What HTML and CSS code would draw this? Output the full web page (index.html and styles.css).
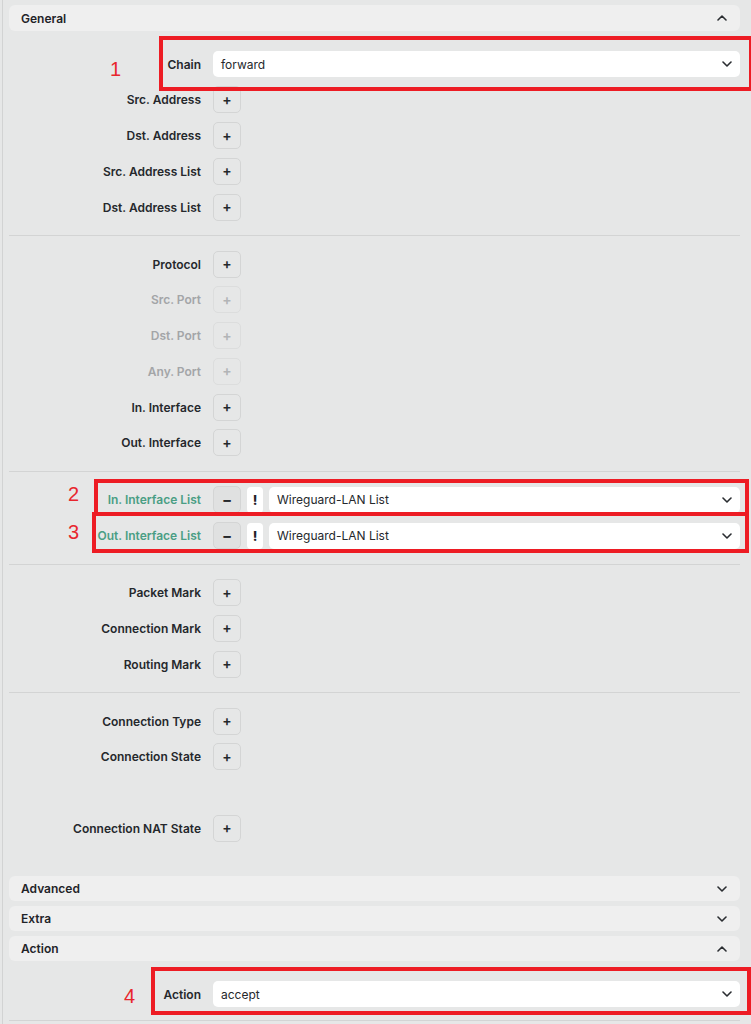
FILE: index.html
```html
<!DOCTYPE html>
<html lang="en">
<head>
<meta charset="UTF-8">
<meta name="viewport" content="width=device-width, initial-scale=1.0">
<title>Firewall Rule</title>
<link rel="stylesheet" href="styles.css">
</head>
<body>
<div class="page">

  <div class="section-head">
    <span>General</span>
    <svg class="chev" width="10" height="6" viewBox="0 0 10 6"><path d="M1 5 L5 1 L9 5" /></svg>
  </div>

  <div class="section-body">
    <div class="group">
      <div class="row">
        <label>Chain</label>
        <div class="select"><span>forward</span><svg class="chev" width="10" height="6" viewBox="0 0 10 6"><path d="M1 1 L5 5 L9 1" /></svg></div>
      </div>
      <div class="row"><label>Src. Address</label><button class="add">+</button></div>
      <div class="row"><label>Dst. Address</label><button class="add">+</button></div>
      <div class="row"><label>Src. Address List</label><button class="add">+</button></div>
      <div class="row"><label>Dst. Address List</label><button class="add">+</button></div>
    </div>

    <div class="group">
      <div class="row"><label>Protocol</label><button class="add">+</button></div>
      <div class="row off"><label>Src. Port</label><button class="add">+</button></div>
      <div class="row off"><label>Dst. Port</label><button class="add">+</button></div>
      <div class="row off"><label>Any. Port</label><button class="add">+</button></div>
      <div class="row"><label>In. Interface</label><button class="add">+</button></div>
      <div class="row"><label>Out. Interface</label><button class="add">+</button></div>
    </div>

    <div class="group">
      <div class="row set">
        <label>In. Interface List</label>
        <button class="remove">&minus;</button>
        <span class="negate">!</span>
        <div class="select"><span>Wireguard-LAN List</span><svg class="chev" width="10" height="6" viewBox="0 0 10 6"><path d="M1 1 L5 5 L9 1" /></svg></div>
      </div>
      <div class="row set">
        <label>Out. Interface List</label>
        <button class="remove">&minus;</button>
        <span class="negate">!</span>
        <div class="select"><span>Wireguard-LAN List</span><svg class="chev" width="10" height="6" viewBox="0 0 10 6"><path d="M1 1 L5 5 L9 1" /></svg></div>
      </div>
    </div>

    <div class="group">
      <div class="row"><label>Packet Mark</label><button class="add">+</button></div>
      <div class="row"><label>Connection Mark</label><button class="add">+</button></div>
      <div class="row"><label>Routing Mark</label><button class="add">+</button></div>
    </div>

    <div class="group last">
      <div class="row"><label>Connection Type</label><button class="add">+</button></div>
      <div class="row"><label>Connection State</label><button class="add">+</button></div>
      <div class="row"></div>
      <div class="row"><label>Connection NAT State</label><button class="add">+</button></div>
    </div>
  </div>

  <div class="section-head closed">
    <span>Advanced</span>
    <svg class="chev" width="10" height="6" viewBox="0 0 10 6"><path d="M1 1 L5 5 L9 1" /></svg>
  </div>
  <div class="section-head closed">
    <span>Extra</span>
    <svg class="chev" width="10" height="6" viewBox="0 0 10 6"><path d="M1 1 L5 5 L9 1" /></svg>
  </div>
  <div class="section-head closed">
    <span>Action</span>
    <svg class="chev" width="10" height="6" viewBox="0 0 10 6"><path d="M1 5 L5 1 L9 5" /></svg>
  </div>

  <div class="section-body action-body">
    <div class="group">
      <div class="row">
        <label>Action</label>
        <div class="select"><span>accept</span><svg class="chev" width="10" height="6" viewBox="0 0 10 6"><path d="M1 1 L5 5 L9 1" /></svg></div>
      </div>
    </div>
  </div>

  <!-- red annotation marks drawn over the form -->
  <div class="mark box1"></div>
  <div class="mark box2"></div>
  <div class="mark box3"></div>
  <div class="mark box4"></div>
  <span class="num n1">1</span>
  <span class="num n2">2</span>
  <span class="num n3">3</span>
  <span class="num n4">4</span>
</div>
</body>
</html>
```

FILE: styles.css
```css
body {
  margin: 0;
  padding: 0;
  background-color: #e6e7e7;
  font-family: 'Inter', 'Noto Sans', sans-serif;
  font-size: 12px;
  color: #1f2328;
}
.page {
  position: relative;
  margin-left: 2px;
  border-left: 1px solid #d2d3d3;
  padding: 5px 11px 0 6px;
  min-height: 1024px;
  box-sizing: border-box;
}
.section-head {
  display: flex;
  align-items: center;
  justify-content: space-between;
  height: 26px;
  padding: 0 13px 0 12px;
  background-color: #efefef;
  border-radius: 6px;
  font-weight: 600;
}
.section-head.closed {
  height: 25px;
  margin-top: 5px;
}
.chev {
  fill: none;
  stroke: #2a2d31;
  stroke-width: 1.6;
  stroke-linecap: round;
  stroke-linejoin: round;
}
.section-body {
  padding-top: 5px;
}
.group {
  display: flex;
  flex-direction: column;
  gap: 9.75px;
  padding: 15px 0 15px;
  border-bottom: 1px solid #d3d4d4;
}
.group.last {
  border-bottom: none;
  padding-bottom: 30px;
}
.row {
  display: flex;
  align-items: center;
  height: 26px;
}
.row label {
  width: 192px;
  flex: none;
  margin-right: 12px;
  text-align: right;
  font-weight: 600;
  color: #25282c;
}
.row.off label {
  color: #a3a5a7;
}
.row.set label {
  color: #4a9e84;
}
.add, .remove {
  width: 28px;
  height: 27px;
  flex: none;
  border: 1px solid #d4d5d5;
  border-radius: 5px;
  background-color: #e6e7e7;
  font-family: 'Inter', sans-serif;
  font-size: 14px;
  font-weight: 600;
  color: #25282c;
  padding: 0;
  line-height: 1;
}
.row.off .add {
  color: #b2b4b6;
  border-color: #dcdddd;
}
.remove {
  background-color: #e0e1e1;
  font-size: 15px;
  font-weight: 700;
}
.negate {
  width: 16px;
  height: 26px;
  margin-left: 6px;
  flex: none;
  display: flex;
  align-items: center;
  justify-content: center;
  background-color: #ffffff;
  border-radius: 4px;
  font-weight: 800;
  font-size: 13px;
}
.select {
  flex: 1;
  height: 26px;
  display: flex;
  align-items: center;
  justify-content: space-between;
  padding: 0 8px 0 8px;
  background-color: #ffffff;
  border-radius: 5px;
  color: #25282c;
}
.negate + .select {
  margin-left: 6px;
}
.action-body .group {
  padding-top: 15px;
  padding-bottom: 13px;
}

/* annotation overlay */
.mark {
  position: absolute;
  border: 4px solid #ed1c24;
  box-sizing: border-box;
}
.box1 { left: 156px; top: 36px; width: 594px; height: 55px; }
.box2 { left: 91px; top: 479px; width: 655px; height: 37px; }
.box3 { left: 89px; top: 512px; width: 657px; height: 41px; }
.box4 { left: 148px; top: 967px; width: 600px; height: 48px; }
.num {
  position: absolute;
  font-family: 'Liberation Sans', sans-serif;
  font-size: 20px;
  color: #e8262d;
  line-height: 1;
}
.n1 { left: 107px; top: 59px; }
.n2 { left: 65px; top: 484px; }
.n3 { left: 65px; top: 522px; }
.n4 { left: 121px; top: 986px; }
```
